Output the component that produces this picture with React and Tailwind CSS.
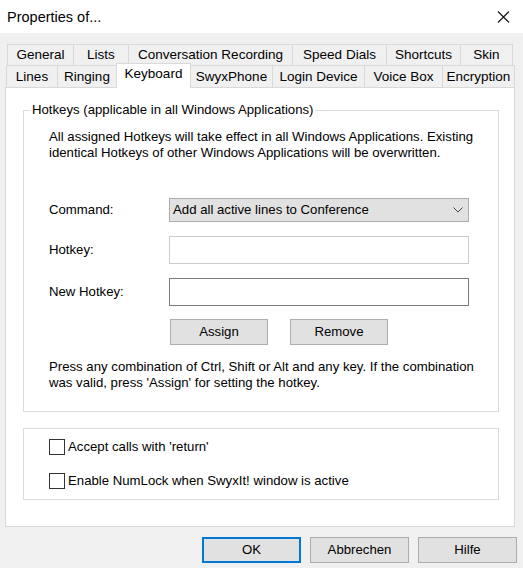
import React from "react";

const rowOne = [
  { label: "General", w: 66 },
  { label: "Lists", w: 55 },
  { label: "Conversation Recording", w: 164 },
  { label: "Speed Dials", w: 94 },
  { label: "Shortcuts", w: 74 },
  { label: "Skin", w: 53 },
];

const rowTwo = [
  { label: "Lines", w: 51 },
  { label: "Ringing", w: 59 },
  { label: "Keyboard", w: 75, active: true },
  { label: "SwyxPhone", w: 81 },
  { label: "Login Device", w: 92 },
  { label: "Voice Box", w: 78 },
  { label: "Encryption", w: 73 },
];

function TabRow({ tabs, className }) {
  return (
    <div className={"flex text-[13.5px] " + className}>
      {tabs.map((t, i) => {
        const last = i === tabs.length - 1;
        const afterActive = i > 0 && tabs[i - 1].active;
        if (t.active) {
          return (
            <div
              key={t.label}
              style={{ width: t.w }}
              className="relative z-10 -mt-[2px] -mb-[1px] h-[25px] bg-white border-l border-t border-r border-[#d9d9d9] flex items-start justify-center pt-[2px]"
            >
              {t.label}
            </div>
          );
        }
        return (
          <div
            key={t.label}
            style={{ width: t.w }}
            className={
              "h-full bg-[#f0f0f0] border-t border-[#d9d9d9] flex items-center justify-center " +
              (afterActive ? "" : "border-l ") +
              (last ? "border-r" : "")
            }
          >
            {t.label}
          </div>
        );
      })}
    </div>
  );
}

function Button({ children, className = "" }) {
  return (
    <div
      className={
        "h-[26px] bg-[#e1e1e1] border border-[#adadad] flex items-center justify-center " +
        className
      }
    >
      {children}
    </div>
  );
}

function CheckRow({ label }) {
  return (
    <div className="flex items-center h-[16px]">
      <div className="w-[16px] h-[16px] border border-[#333333] bg-white mr-[3px]" />
      <span>{label}</span>
    </div>
  );
}

export default function App() {
  return (
    <div
      className="w-[523px] h-[568px] bg-[#f0f0f0] text-black text-[13.2px] leading-[16px] flex flex-col overflow-hidden"
      style={{ fontFamily: '"Liberation Sans", Arial, sans-serif' }}
    >
      {/* title bar */}
      <div className="h-[33px] bg-white flex items-center justify-between pl-[7px] pr-[13px] shrink-0">
        <span className="text-[14.5px]">Properties of...</span>
        <svg width="13" height="12" viewBox="0 0 13 12" className="mt-[1px]">
          <path d="M1 0.5 L12 11.5 M12 0.5 L1 11.5" stroke="#111" strokeWidth="1.1" fill="none" />
        </svg>
      </div>

      {/* tabs */}
      <div className="pt-[11px] flex flex-col">
        <TabRow tabs={rowOne} className="h-[21px] pl-[7px]" />
        <TabRow tabs={rowTwo} className="h-[22px] pl-[6px]" />
      </div>

      {/* property page */}
      <div className="ml-[5px] w-[510px] h-[440px] bg-white border border-[#d9d9d9] pt-[22px] pl-[17px]">
        <div className="relative w-[476px] border border-[#dcdcdc] pt-[18px] pl-[25px] pb-[20px]">
          <span className="absolute -top-[9px] left-[6px] bg-white px-[2px]">
            Hotkeys (applicable in all Windows Applications)
          </span>
          <p className="pr-[6px]">
            All assigned Hotkeys will take effect in all Windows Applications. Existing identical Hotkeys of other Windows Applications will be overwritten.
          </p>

          <div className="mt-[37px] flex items-center">
            <span className="w-[120px]">Command:</span>
            <div className="w-[300px] h-[24px] bg-[#e1e1e1] border border-[#adadad] flex items-center justify-between pl-[3px] pr-[5px]">
              <span>Add all active lines to Conference</span>
              <svg width="10" height="6" viewBox="0 0 10 6">
                <path d="M0.5 0.5 L5 5 L9.5 0.5" stroke="#444" strokeWidth="1" fill="none" />
              </svg>
            </div>
          </div>

          <div className="mt-[14px] flex items-center">
            <span className="w-[120px]">Hotkey:</span>
            <div className="w-[300px] h-[28px] bg-white border border-[#cccccc]" />
          </div>

          <div className="mt-[14px] flex items-center">
            <span className="w-[120px]">New Hotkey:</span>
            <div className="w-[300px] h-[28px] bg-white border border-[#7a7a7a]" />
          </div>

          <div className="mt-[13px] flex pl-[121px] gap-[22px]">
            <Button className="w-[98px]">Assign</Button>
            <Button className="w-[98px]">Remove</Button>
          </div>

          <p className="mt-[14px] pr-[6px]">
            Press any combination of Ctrl, Shift or Alt and any key. If the combination was valid, press 'Assign' for setting the hotkey.
          </p>
        </div>

        <div className="mt-[16px] w-[476px] border border-[#dcdcdc] pt-[10px] pb-[10px] pl-[25px] flex flex-col gap-[18px]">
          <CheckRow label="Accept calls with 'return'" />
          <CheckRow label="Enable NumLock when SwyxIt! window is active" />
        </div>
      </div>

      {/* dialog buttons */}
      <div className="mt-[10px] flex justify-end pr-[6px] gap-[9px]">
        <div className="w-[99px] h-[26px] bg-[#e1e1e1] border-2 border-[#0078d7] flex items-center justify-center">
          OK
        </div>
        <Button className="w-[99px]">Abbrechen</Button>
        <Button className="w-[99px]">Hilfe</Button>
      </div>
    </div>
  );
}
